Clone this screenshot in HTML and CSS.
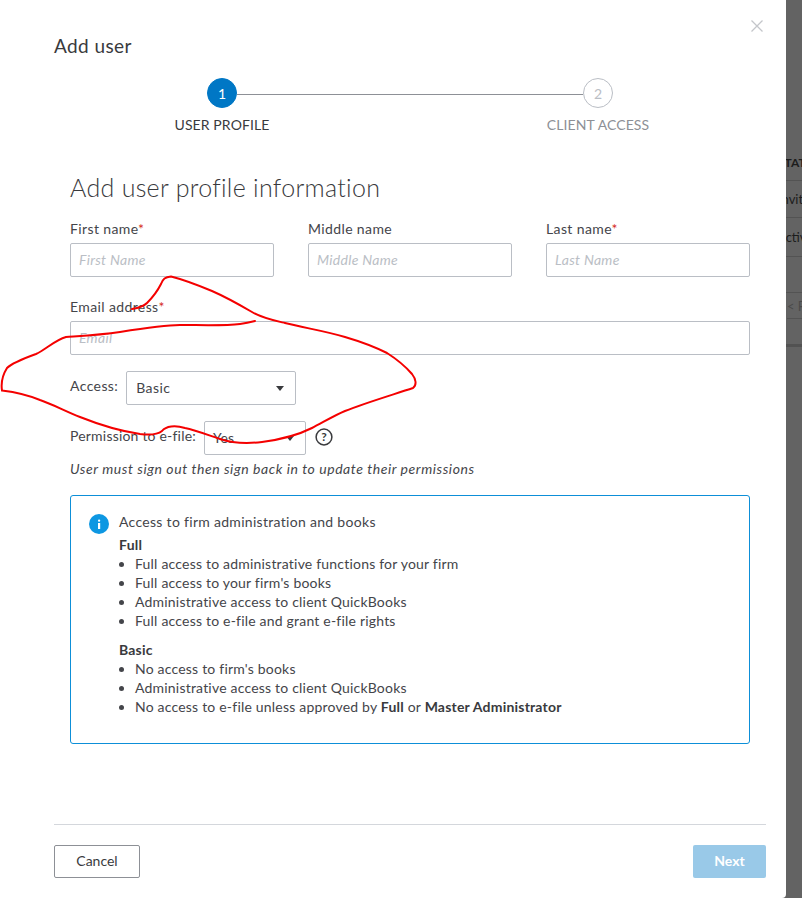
FILE: index.html
```html
<!DOCTYPE html>
<html lang="en">
<head>
<meta charset="utf-8">
<title>Add user</title>
<link rel="stylesheet" href="styles.css">
</head>
<body>
<div class="modal">
  <button class="close" aria-label="Close"><svg width="12" height="12" viewBox="0 0 12 12"><path d="M.5.5l11 11M11.500.5l-11 11" stroke="#c4c6ca" stroke-width="1.3" fill="none"/></svg></button>
  <h1 class="title">Add user</h1>
  <div class="stepper">
    <div class="step active"><span class="dot">1</span><span class="step-label">USER PROFILE</span></div>
    <div class="step"><span class="dot">2</span><span class="step-label">CLIENT ACCESS</span></div>
  </div>
  <form class="form">
    <h2 class="heading">Add user profile information</h2>
    <div class="names">
      <div class="field"><label>First name<span class="req">*</span></label><input placeholder="First Name"></div>
      <div class="field"><label>Middle name</label><input placeholder="Middle Name"></div>
      <div class="field"><label>Last name<span class="req">*</span></label><input placeholder="Last Name"></div>
    </div>
    <div class="field email"><label>Email address<span class="req">*</span></label><input placeholder="Email"></div>
    <div class="row access">
      <span class="row-label">Access:</span>
      <div class="select select-access">Basic<i class="caret"></i></div>
    </div>
    <div class="row permission">
      <span class="row-label">Permission to e-file:</span>
      <div class="select select-efile">Yes<i class="caret"></i></div>
      <svg class="help" width="18" height="18" viewBox="0 0 18 18"><circle cx="9" cy="9" r="7.900" fill="none" stroke="#393a3d" stroke-width="1.500"/><text x="9" y="13" text-anchor="middle" class="help-q">?</text></svg>
    </div>
    <p class="note">User must sign out then sign back in to update their permissions</p>
    <div class="info">
      <svg class="info-icon" width="20" height="20" viewBox="0 0 20 20"><circle cx="10" cy="10" r="10" fill="#0d97e2"/><rect x="9" y="9" width="2.200" height="6" fill="#fff"/><rect x="9" y="5.500" width="2.200" height="2.200" rx="1" fill="#fff"/></svg>
      <div class="info-body">
        <p class="info-title">Access to firm administration and books</p>
        <p class="info-head">Full</p>
        <ul>
          <li>Full access to administrative functions for your firm</li>
          <li>Full access to your firm's books</li>
          <li>Administrative access to client QuickBooks</li>
          <li>Full access to e-file and grant e-file rights</li>
        </ul>
        <p class="info-head basic">Basic</p>
        <ul>
          <li>No access to firm's books</li>
          <li>Administrative access to client QuickBooks</li>
          <li>No access to e-file unless approved by <b>Full</b> or <b>Master Administrator</b></li>
        </ul>
      </div>
    </div>
  </form>
  <div class="footer">
    <button class="btn cancel" type="button">Cancel</button>
    <button class="btn next" type="button">Next</button>
  </div>
</div>
<div class="backdrop">
  <div class="bg-row r1">STATUS</div>
  <div class="bg-row r2">Invited</div>
  <div class="bg-row r3">Active</div>
  <div class="bg-row r4"></div>
  <div class="bg-row r5">&lt; First</div>
  <div class="bg-band"></div>
</div>
<svg class="scribble" width="802" height="898" viewBox="0 0 802 898"><path d="M132 309 C138 308 143 307 147 303 C153 297 158 290 161 284 C163 279 165 277 171 276.500 C185 280 200 286 212 291 C228 298 240 305 252 312 C262 318 272 320 285 323 C305 328 325 331 345 337 C362 342 375 347 387 353 C398 360 406 367 412 374 C416 379 417 385 413 388 C392 395 365 403 345 411 C333 416 322 423 312 428 C300 434 285 439 262 442 C245 444 232 443 220 439 C208 435 195 430 185 428 C175 425 166 426 162 431 C157 435 148 435 140 434 C120 431 100 425 80 417 C65 411 52 404 40 400 C28 395 14 392 2 390.500 C1 384 2 376 7 368 C12 363 25 358 36 354 C45 350 55 340 66 337 C80 336 100 335 120 332 C145 328 165 325 180 325 C200 325 225 326 240 324 C247 323 251 322 255 321" fill="none" stroke="#f40000" stroke-width="2" stroke-linecap="round"/></svg>
</body>
</html>
```
FILE: styles.css
```css
* { box-sizing: border-box; }
html, body { margin: 0; padding: 0; }
body {
  width: 802px;
  height: 898px;
  display: flex;
  overflow: hidden;
  position: relative;
  background: #636363;
  font-family: "Lato", "Liberation Sans", sans-serif;
  font-size: 14px;
  color: #44454a;
}
.modal {
  width: 786px;
  height: 898px;
  flex: none;
  display: flex;
  flex-direction: column;
  padding: 0 20px 20px 54px;
  background: #fff;
  position: relative;
  border-bottom-right-radius: 4px;
}
.close {
  position: absolute;
  top: 20px;
  left: 751px;
  width: 12px;
  height: 12px;
  padding: 0;
  border: 0;
  background: none;
  display: block;
}
.close svg { display: block; }
.title {
  margin: 34px 0 1px;
  font-size: 19px;
  line-height: 24px;
  font-weight: 400;
  letter-spacing: 0.4px;
  color: #393a3d;
}
.stepper {
  position: relative;
  width: 496px;
  margin: 19px 0 0 108px;
  display: flex;
  justify-content: space-between;
}
.stepper::before {
  content: "";
  position: absolute;
  left: 75px;
  right: 75px;
  top: 16px;
  height: 1px;
  background: #8d9096;
}
.step {
  width: 120px;
  display: flex;
  flex-direction: column;
  align-items: center;
  color: #8d9096;
}
.dot {
  width: 30px;
  height: 30px;
  border-radius: 50%;
  border: 1px solid #babec5;
  display: flex;
  align-items: center;
  justify-content: center;
  color: #babec5;
  background: #fff;
  font-size: 14px;
}
.step.active { color: #393a3d; }
.step.active .dot {
  background: #0077c5;
  border-color: #0077c5;
  color: #fff;
}
.step-label {
  margin-top: 8px;
  line-height: 18px;
  white-space: nowrap;
  letter-spacing: 0.1px;
}
.form { margin-left: 16px; width: 680px; letter-spacing: 0.2px; }
.heading {
  margin: 37px 0 0;
  font-size: 25px;
  line-height: 32px;
  font-weight: 300;
  letter-spacing: 0.3px;
  color: #393a3d;
}
.names {
  display: grid;
  grid-template-columns: 204px 204px 204px;
  column-gap: 34px;
  margin-top: 16px;
}
.field label {
  display: block;
  line-height: 20px;
  margin-bottom: 4px;
  letter-spacing: 0.38px;
}
.req { color: #d52b1e; }
.field input {
  display: block;
  width: 100%;
  height: 34px;
  padding: 0 8px 2px;
  border: 1px solid #babec5;
  border-radius: 2px;
  font: inherit;
  letter-spacing: 0.3px;
  color: #393a3d;
  background: #fff;
}
.field input::placeholder {
  color: #babec5;
  font-style: italic;
  opacity: 1;
}
.email { margin-top: 20px; }
.row { display: flex; align-items: center; }
.access { margin-top: 16px; }
.permission { margin-top: 16px; }
.row-label { margin-top: -5px; margin-right: 8px; letter-spacing: 0.4px; }
.permission .row-label { letter-spacing: 0.2px; margin-top: -6px; }
.select {
  height: 34px;
  padding: 0 9px 2px;
  border: 1px solid #babec5;
  border-radius: 2px;
  display: flex;
  align-items: center;
  justify-content: space-between;
}
.select-access { width: 170px; letter-spacing: 0.4px; }
.select-efile { width: 102px; padding-left: 8px; }
.caret {
  width: 0;
  height: 0;
  border-left: 4px solid transparent;
  border-right: 4px solid transparent;
  border-top: 5px solid #393a3d;
  margin: 2px 2px 0 0;
}
.help { margin: -2px 0 0 9px; }
.help-q { font-size: 12px; font-weight: 700; fill: #393a3d; }
.note {
  margin: 4px 0 0;
  line-height: 20px;
  font-style: italic;
  letter-spacing: 0.56px;
}
.info {
  margin-top: 16px;
  height: 249px;
  border: 1px solid #0d8fd8;
  border-radius: 3px;
  padding: 18px 18px 0;
  display: flex;
  gap: 10px;
  align-items: flex-start;
}
.info-icon { flex: none; }
.info-body { line-height: 19px; margin-top: -2px; }
.info-body p { margin: 0; }
.info-body .info-title { letter-spacing: 0.3px; }
.info-body .info-head { margin-top: 4px; font-weight: 700; color: #393a3d; }
.info-body .info-head.basic { margin-top: 10px; }
.info-body ul { margin: 0; padding: 0 0 0 16px; }
.info-body b { font-weight: 700; color: #393a3d; }
.footer {
  margin-top: auto;
  height: 54px;
  border-top: 1px solid #d4d7dc;
  padding-top: 20px;
  display: flex;
  justify-content: space-between;
}
.btn {
  height: 33px;
  border-radius: 2px;
  font-family: inherit;
  font-size: 14px;
  padding: 0 0 2px;
}
.cancel {
  width: 86px;
  background: #fff;
  border: 1px solid #8d9096;
  color: #393a3d;
}
.next {
  width: 73px;
  background: #99c9e8;
  border: 0;
  color: #fff;
  font-weight: 700;
}
.backdrop {
  width: 16px;
  flex: none;
  overflow: hidden;
  white-space: nowrap;
  padding-top: 150px;
  color: #1c1c1c;
  font-size: 13px;
  background: #636363;
}
.bg-row {
  border-bottom: 1px solid #535353;
  width: 60px;
}
.r1 { height: 31px; line-height: 26px; font-size: 12px; font-weight: 700; margin-left: -8px; }
.r2 { height: 37px; line-height: 37px; margin-left: -8px; }
.r3 { height: 39px; line-height: 39px; margin-left: -9px; }
.r4 { height: 36px; }
.r5 { height: 26px; line-height: 26px; color: #4a4a4a; margin-left: 1px; }
.bg-band { height: 3px; margin-top: 25px; background: #525252; }
.scribble {
  position: absolute;
  left: 0;
  top: 0;
  pointer-events: none;
}
```
